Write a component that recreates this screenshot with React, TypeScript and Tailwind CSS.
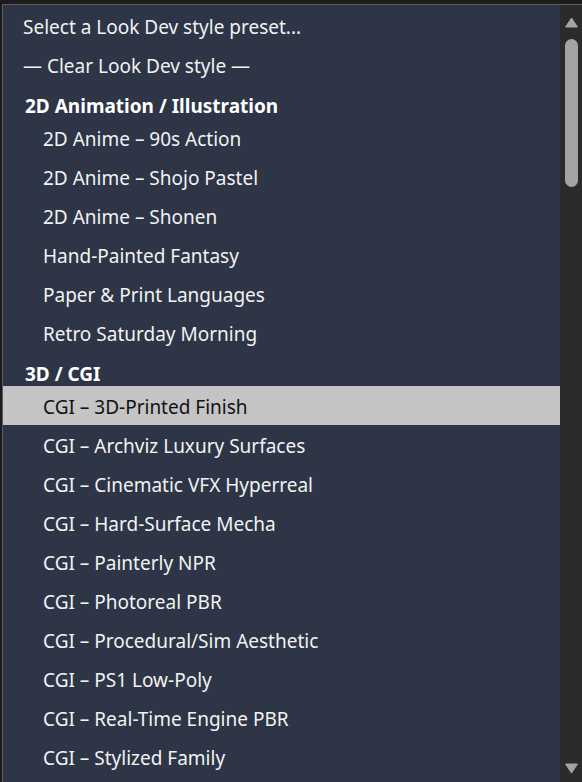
import React from 'react';

type Entry = { kind: 'item' | 'group'; label: string; indent?: boolean; selected?: boolean };

const entries: Entry[] = [
  { kind: 'item', label: 'Select a Look Dev style preset...' },
  { kind: 'item', label: '— Clear Look Dev style —' },
  { kind: 'group', label: '2D Animation / Illustration' },
  { kind: 'item', indent: true, label: '2D Anime – 90s Action' },
  { kind: 'item', indent: true, label: '2D Anime – Shojo Pastel' },
  { kind: 'item', indent: true, label: '2D Anime – Shonen' },
  { kind: 'item', indent: true, label: 'Hand-Painted Fantasy' },
  { kind: 'item', indent: true, label: 'Paper & Print Languages' },
  { kind: 'item', indent: true, label: 'Retro Saturday Morning' },
  { kind: 'group', label: '3D / CGI' },
  { kind: 'item', indent: true, selected: true, label: 'CGI – 3D-Printed Finish' },
  { kind: 'item', indent: true, label: 'CGI – Archviz Luxury Surfaces' },
  { kind: 'item', indent: true, label: 'CGI – Cinematic VFX Hyperreal' },
  { kind: 'item', indent: true, label: 'CGI – Hard-Surface Mecha' },
  { kind: 'item', indent: true, label: 'CGI – Painterly NPR' },
  { kind: 'item', indent: true, label: 'CGI – Photoreal PBR' },
  { kind: 'item', indent: true, label: 'CGI – Procedural/Sim Aesthetic' },
  { kind: 'item', indent: true, label: 'CGI – PS1 Low-Poly' },
  { kind: 'item', indent: true, label: 'CGI – Real-Time Engine PBR' },
  { kind: 'item', indent: true, label: 'CGI – Stylized Family' },
];

function Row({ entry }: { entry: Entry }) {
  if (entry.kind === 'group') {
    return (
      <div className="h-[34px] shrink-0 flex items-center pt-[10px] pl-[22px] font-bold text-[#ffffff] whitespace-nowrap">
        {entry.label}
      </div>
    );
  }
  return (
    <div
      className={`h-[39px] shrink-0 flex items-center pt-[2px] whitespace-nowrap ${entry.indent ? 'pl-[40px]' : 'pl-[20px]'} ${
        entry.selected ? 'bg-[#c4c4c4] text-[#111111]' : 'text-[#f2f2f2]'
      }`}
    >
      {entry.label}
    </div>
  );
}

export default function App() {
  return (
    <div
      className="w-[582px] h-[782px] bg-[#1c1c1f] pt-[4px] pl-[2px] overflow-hidden"
      style={{ fontFamily: '"Noto Sans", "Open Sans", sans-serif' }}
    >
      <div className="h-full flex border-t border-l border-[#5c5c5c]">
        {/* options list */}
        <div className="flex-1 bg-[#2d3547] text-[19px] leading-[26px] pt-[1px] flex flex-col overflow-hidden">
          {entries.map((e, i) => (
            <Row key={i} entry={e} />
          ))}
        </div>

        {/* scrollbar */}
        <div className="w-[22px] bg-[#2b2b2b] flex flex-col items-center pt-[12px]">
          <svg width="13" height="11" viewBox="0 0 13 11">
            <path d="M6.5 1 L12.5 10 L0.5 10 Z" fill="#a3a3a3" stroke="#a3a3a3" strokeLinejoin="round" />
          </svg>
          <div className="mt-[11px] w-[13px] h-[148px] rounded-full bg-[#a3a3a3]" />
          <div className="flex-1" />
          <svg width="13" height="11" viewBox="0 0 13 11" className="mb-[8px]">
            <path d="M0.5 1 L12.5 1 L6.5 10 Z" fill="#a3a3a3" stroke="#a3a3a3" strokeLinejoin="round" />
          </svg>
        </div>
      </div>
    </div>
  );
}
